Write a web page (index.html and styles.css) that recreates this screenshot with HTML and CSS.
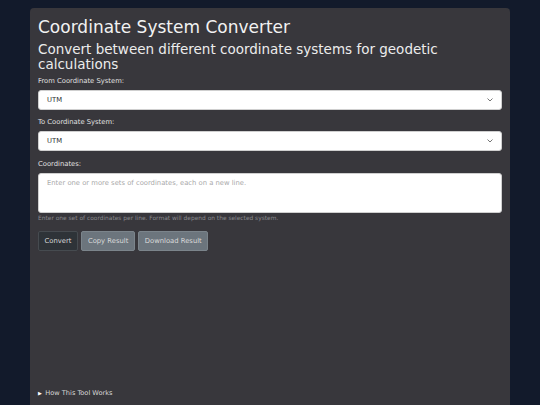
FILE: index.html
```html
<!DOCTYPE html>
<html lang="en">
<head>
<meta charset="utf-8">
<title>Coordinate System Converter</title>
<link rel="stylesheet" href="styles.css">
</head>
<body>
<div class="container">
  <h1 class="title">Coordinate System Converter</h1>
  <h2 class="subtitle">Convert between different coordinate systems for geodetic calculations</h2>
  <div class="field">
    <label class="label">From Coordinate System:</label>
    <div class="select"><span>UTM</span><svg class="chev" viewBox="0 0 6 4" width="6" height="4"><path d="M0.5 0.5 L3 3 L5.5 0.5" fill="none" stroke="#666" stroke-width="0.9"/></svg></div>
  </div>
  <div class="field">
    <label class="label">To Coordinate System:</label>
    <div class="select"><span>UTM</span><svg class="chev" viewBox="0 0 6 4" width="6" height="4"><path d="M0.5 0.5 L3 3 L5.5 0.5" fill="none" stroke="#666" stroke-width="0.9"/></svg></div>
  </div>
  <div class="field">
    <label class="label">Coordinates:</label>
    <div class="textarea"><span class="placeholder">Enter one or more sets of coordinates, each on a new line.</span></div>
    <div class="help">Enter one set of coordinates per line. Format will depend on the selected system.</div>
  </div>
  <div class="buttons">
    <button class="btn btn-dark">Convert</button>
    <button class="btn btn-gray">Copy Result</button>
    <button class="btn btn-gray">Download Result</button>
  </div>
  <div class="spacer"></div>
  <div class="summary"><span class="tri">&#9654;</span>How This Tool Works</div>
</div>
</body>
</html>
```
FILE: styles.css
```css
html, body {
  margin: 0;
  padding: 0;
  height: 100%;
}
body {
  background: #121a2b;
  font-family: "DejaVu Sans", sans-serif;
  color: #e6e6e6;
  padding-top: 8px;
  box-sizing: border-box;
  overflow: hidden;
}
.container {
  width: 480px;
  margin: 0 auto;
  background: #38373c;
  border-radius: 4px 4px 0 0;
  padding: 9px 8px 0 8px;
  box-sizing: border-box;
  height: 397px;
  display: flex;
  flex-direction: column;
}
.title {
  font-size: 17px;
  font-weight: normal;
  margin: 0;
  line-height: 21px;
  color: #f2f2f2;
}
.subtitle {
  font-size: 13.5px;
  font-weight: normal;
  margin: 3.6px 0 0 0;
  line-height: 15.5px;
  color: #ececec;
}
.field {
  display: flex;
  flex-direction: column;
}
.label {
  font-size: 6.8px;
  line-height: 10px;
  margin: 7.5px 0 4px;
  color: #e0e0e0;
}
.field:first-of-type .label {
  margin-top: 3.4px;
}
.select {
  height: 20px;
  background: #fff;
  border-radius: 3px;
  border: 1px solid #cfcfcf;
  box-sizing: border-box;
  display: flex;
  align-items: center;
  justify-content: space-between;
  padding: 0 8px 0 8px;
  font-size: 6.8px;
  color: #333;
}
.chev { display: block; }
.textarea {
  height: 40.5px;
  background: #fff;
  border-radius: 3px;
  border: 1px solid #cfcfcf;
  box-sizing: border-box;
  padding: 4px 8px;
  font-size: 6.8px;
  line-height: 10px;
}
.placeholder { color: #a9a9a9; }
.help {
  font-size: 5.9px;
  color: #8a8a8e;
  margin-top: 1px;
  line-height: 9px;
}
.buttons {
  display: flex;
  gap: 3.5px;
  margin-top: 7.7px;
}
.btn {
  font-family: "DejaVu Sans", sans-serif;
  font-size: 6.8px;
  height: 20px;
  padding: 0 5.5px;
  border-radius: 2px;
  color: #dadada;
  cursor: pointer;
}
.btn-dark {
  background: #2e3338;
  border: 1px solid #464b50;
}
.btn-gray {
  background: #6c757d;
  border: 1px solid #7b848b;
}
.spacer { flex: 1; }
.summary {
  font-size: 6.6px;
  line-height: 10px;
  color: #d8d8d8;
  margin-bottom: 7px;
  display: flex;
  align-items: center;
}
.tri {
  font-size: 5px;
  margin-right: 3.5px;
  color: #fff;
}
```
